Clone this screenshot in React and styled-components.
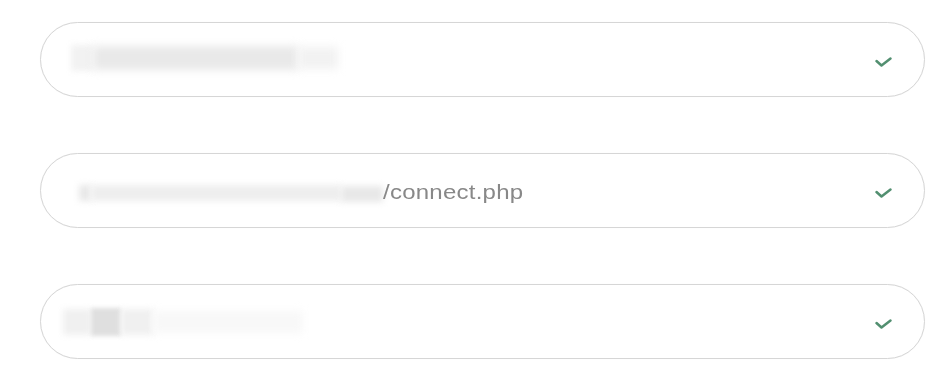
import React from "react";
import styled, { createGlobalStyle } from "styled-components";

const Global = createGlobalStyle`
  html, body { margin: 0; padding: 0; background: #ffffff; }
  body { font-family: "Liberation Sans", Arial, sans-serif; }
`;

const Page = styled.div`
  width: 948px;
  height: 384px;
  box-sizing: border-box;
  padding: 22px 0 0 40px;
  display: flex;
  flex-direction: column;
  gap: 56px;
  overflow: hidden;
`;

const Field = styled.div`
  width: 885px;
  height: 75px;
  box-sizing: border-box;
  border: 1.5px solid #d6d6d6;
  border-radius: 38px;
  display: flex;
  align-items: center;
  padding: 0 31px 0 0;
  background: #fff;
  box-shadow: 0 0 1px rgba(0, 0, 0, 0.06);
`;

const Content = styled.div`
  flex: 1;
  display: flex;
  align-items: center;
  height: 100%;
  padding-left: ${(p) => p.$pad}px;
`;

const Blur = styled.div`
  width: ${(p) => p.$w}px;
  height: ${(p) => p.$h}px;
  margin-top: ${(p) => p.$mt || 0}px;
  background: ${(p) => p.$c};
  filter: blur(${(p) => p.$b || 4}px);
  flex-shrink: 0;
`;

const Value = styled.span`
  display: inline-block;
  font-size: 20px;
  letter-spacing: 0.2px;
  color: #888888;
  margin-top: 4px;
  transform: scaleX(1.2);
  transform-origin: left center;
  filter: blur(0.3px);
`;

const Check = styled.svg`
  width: 19px;
  height: 14px;
  margin-top: 5px;
  flex-shrink: 0;
`;

const CheckIcon = () => (
  <Check viewBox="0 0 19 14">
    <polyline
      points="2.5,6 7.5,10.5 16.5,3.5"
      fill="none"
      stroke="#528f70"
      strokeWidth="2.5"
      strokeLinecap="round"
      strokeLinejoin="round"
    />
  </Check>
);

export default function App() {
  return (
    <>
      <Global />
      <Page>
        <Field>
          <Content $pad={30}>
            <Blur $w={22} $h={26} $c="#f2f2f2" $b={3} $mt={-4} />
            <Blur $w={205} $h={24} $c="#e9e9e9" $b={4} $mt={-4} />
            <Blur $w={40} $h={22} $c="#f2f2f2" $b={4} $mt={-4} />
          </Content>
          <CheckIcon />
        </Field>
        <Field>
          <Content $pad={38}>
            <Blur $w={12} $h={16} $c="#e8e8e8" $b={3} $mt={4} />
            <Blur $w={250} $h={16} $c="#eeeeee" $b={3} $mt={4} />
            <Blur $w={42} $h={16} $c="#e8e8e8" $b={3} $mt={6} />
            <Value>/connect.php</Value>
          </Content>
          <CheckIcon />
        </Field>
        <Field>
          <Content $pad={22}>
            <Blur $w={28} $h={26} $c="#f0f0f0" $b={3} />
            <Blur $w={30} $h={28} $c="#dfdfdf" $b={2} />
            <Blur $w={32} $h={26} $c="#f0f0f0" $b={3} />
            <Blur $w={150} $h={22} $c="#f8f8f8" $b={4} />
          </Content>
          <CheckIcon />
        </Field>
      </Page>
    </>
  );
}
